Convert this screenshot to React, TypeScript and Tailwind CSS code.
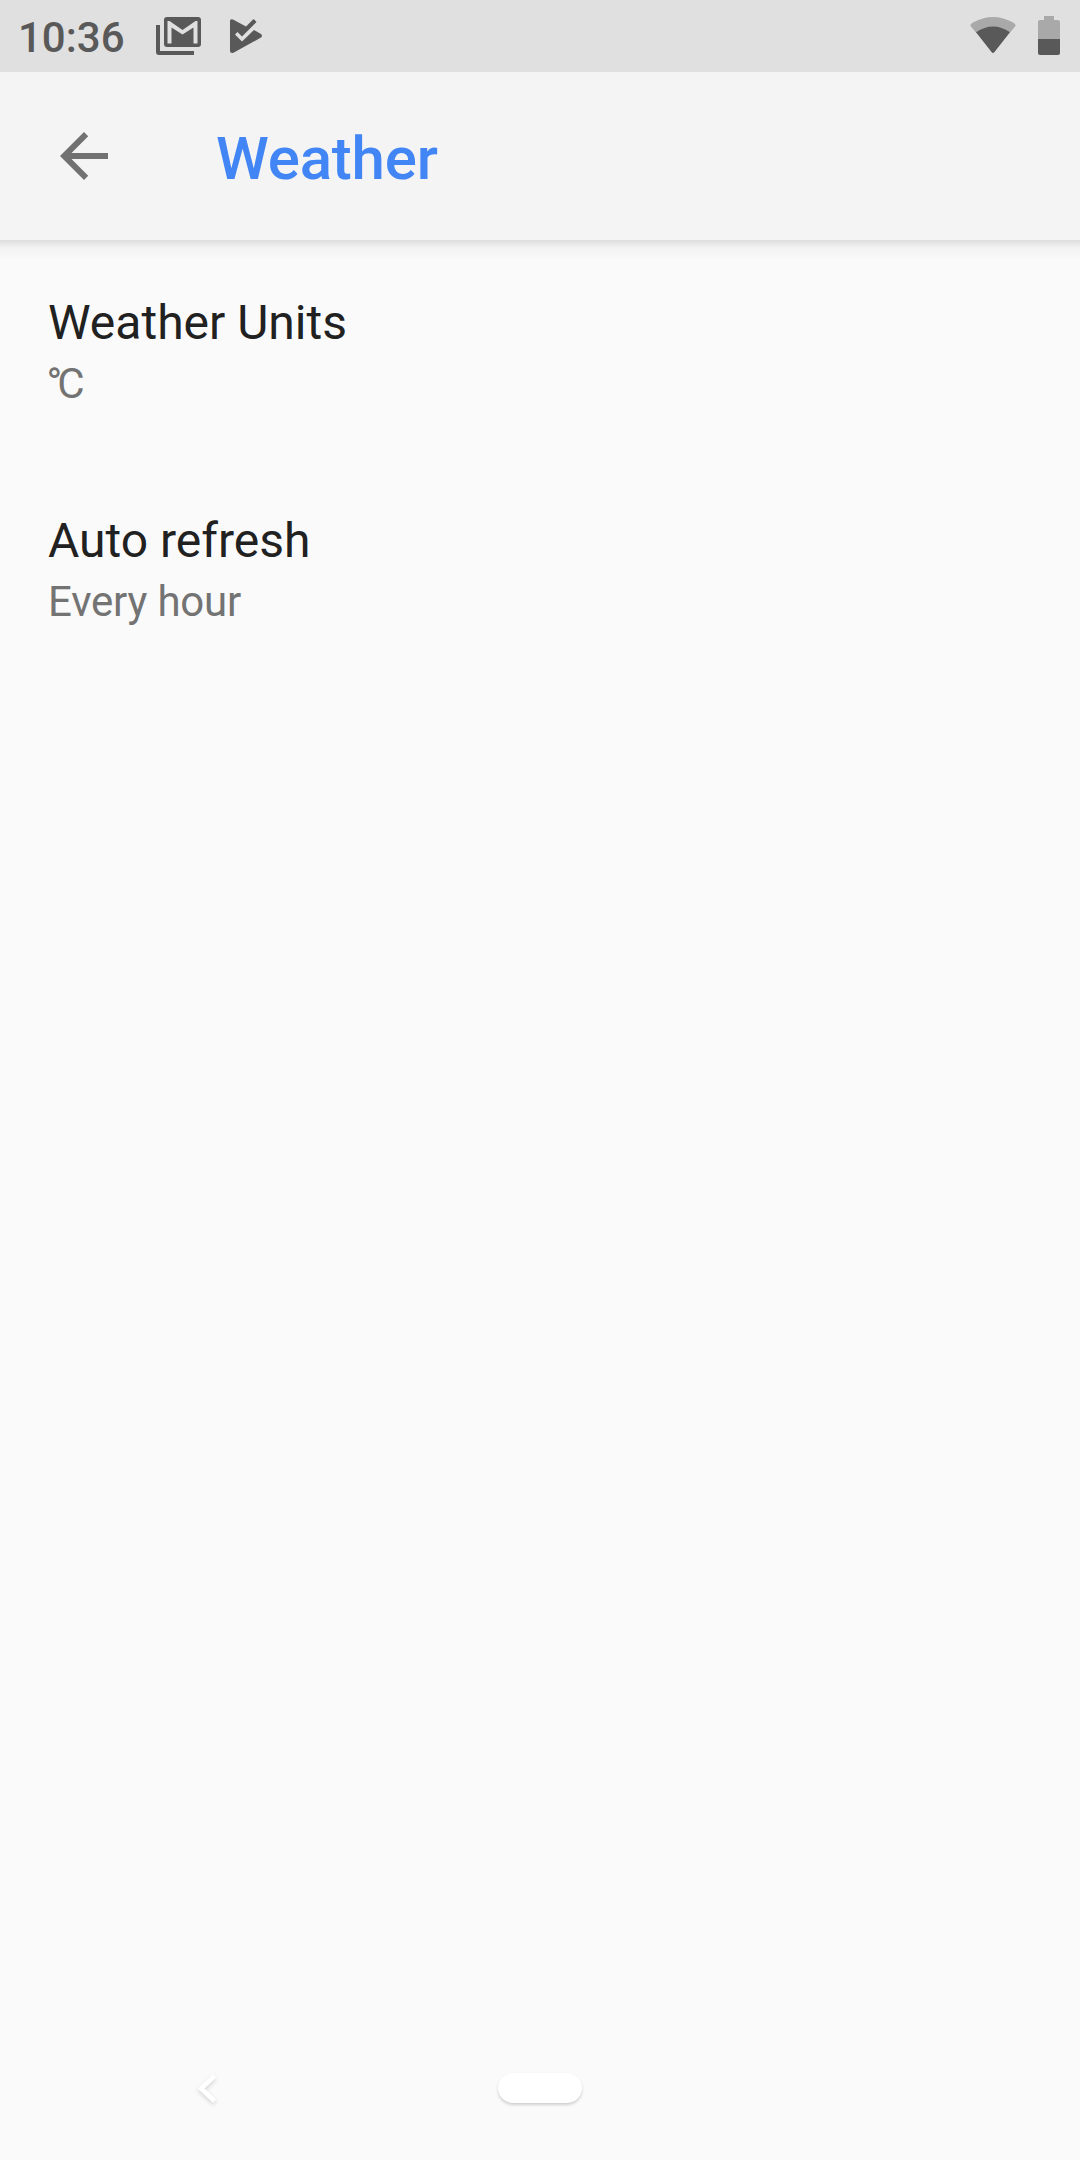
function StatusBar() {
  return (
    <div className="flex h-[72px] items-center bg-[#e0e0e0] pl-[18px] text-[#595959]">
      <span className="w-[138px] pt-[3px] text-[42px] leading-[72px] font-medium">10:36</span>
      <svg className="h-[72px] w-[45px]" viewBox="156 0 45 72" fill="currentColor">
        <path d="M156 25H160V51H194V55H159Q156 55 156 52Z" />
        <path
          fillRule="evenodd"
          d="M167 17H198Q201 17 201 20V44Q201 47 198 47H167Q164 47 164 44V20Q164 17 167 17ZM167.500 21V43.500H171.500V27.500L182.500 34.500L193.500 27.500V43.500H197.500V21H195.500L182.500 30L169.500 21Z"
        />
      </svg>
      <svg className="ml-[29px] h-[72px] w-[34px]" viewBox="230 0 34 72" fill="currentColor">
        <path d="M230 21Q230 18.500 233 19.500L246 26.500L253 19.500Q254 18.500 256.500 22L242 36.500L237.500 32L235 34.500L242 41.500L254 30L261 34Q263 36 261 37.500L233 53Q230 53.500 230 51Z" />
      </svg>
      <div className="flex-1" />
      <svg className="h-[72px] w-[46px]" viewBox="970.5 0 46 72">
        <path fill="#a9a9a9" d="M971 26Q970.500 24 973 22.800Q993.500 11 1014 22.800Q1016.500 24 1016 26L1010.500 32.500H976.500Z" />
        <path fill="#595959" d="M976.500 32.300Q993.500 20.500 1010.500 32.300L995 52Q993.500 54 992 52Z" />
      </svg>
      <svg className="mr-[20px] ml-[22px] h-[72px] w-[22px]" viewBox="1038 0 22 72">
        <path fill="#a9a9a9" d="M1044 16H1054V20H1058Q1060 20 1060 22V39H1038V22Q1038 20 1040 20H1044Z" />
        <path fill="#595959" d="M1038 39H1060V53Q1060 55 1058 55H1040Q1038 55 1038 53Z" />
      </svg>
    </div>
  );
}

function Header() {
  return (
    <header className="flex h-[168px] items-center bg-[#f4f4f4] pl-12">
      <svg className="size-[72px]" viewBox="0 0 24 24" fill="#717171">
        <path d="M20 11H7.830l5.590-5.590L12 4l-8 8 8 8 1.410-1.410L7.830 13H20v-2z" />
      </svg>
      <h1 className="ml-24 pt-[5px] text-[60px] leading-[72px] font-medium tracking-[-0.2px] text-[#4285f4]">Weather</h1>
    </header>
  );
}

function Preference({ title, summary, tight }: { title: string; summary: string; tight?: boolean }) {
  return (
    <div className="h-[218px] px-12 pt-[35px]">
      <div className="text-[48px] leading-[56px] text-[#212121]">{title}</div>
      <div className={`mt-2 text-[42px] leading-[50px] text-[#737373] ${tight ? "-ml-[1.5px] tracking-[-5px]" : "tracking-[-0.2px]"}`}>
        {summary}
      </div>
    </div>
  );
}

export default function App() {
  return (
    <div className="flex h-[2160px] w-[1080px] flex-col overflow-hidden bg-[#fafafa] font-['Roboto',sans-serif]">
      <StatusBar />
      <Header />
      <div className="h-5 bg-linear-to-b from-[#dddddd] via-[#f3f3f3] via-40% to-[#fafafa]" />
      <main className="flex-1">
        <Preference title="Weather Units" summary="°C" tight />
        <Preference title="Auto refresh" summary="Every hour" />
      </main>
      <nav className="flex h-[144px] items-center">
        <svg className="ml-[190px] h-[144px] w-[34px]" viewBox="190 2016 34 144" fill="none">
          <path d="M214.500 2076L201 2088.500L214.500 2101" stroke="#fff" strokeWidth="4.5" className="drop-shadow-[0_2px_2px_rgba(0,0,0,0.16)]" />
        </svg>
        <div className="ml-[274px] h-[30px] w-[84px] rounded-full bg-white shadow-[0_2px_3px_rgba(0,0,0,0.17)]" />
      </nav>
    </div>
  );
}
